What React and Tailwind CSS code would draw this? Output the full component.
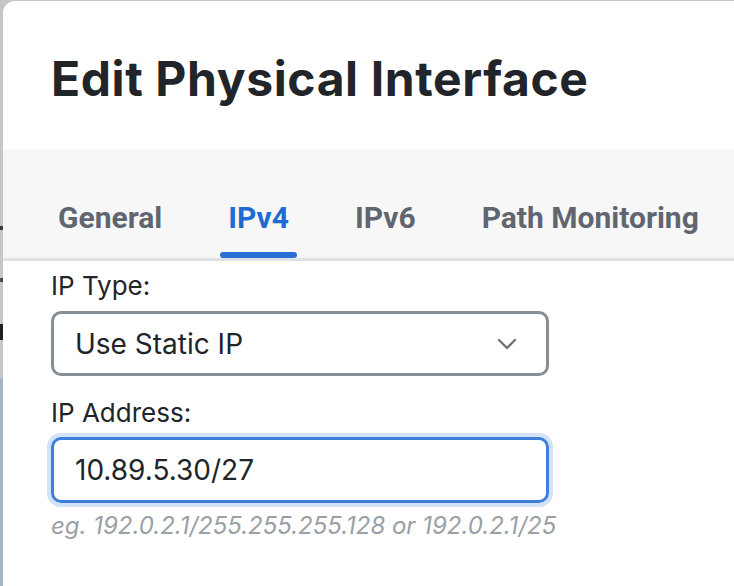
import React from 'react';

const tabs = ['General', 'IPv4', 'IPv6', 'Path Monitoring'];

const App = () => {
  return (
    <div className="w-[734px] h-[586px] overflow-hidden bg-[#c6c6c6] pt-px flex">
      {/* Backdrop strip on the left */}
      <div className="w-[3px] flex flex-col shrink-0">
        <div className="h-[225px] bg-[#c6c6c6]"></div>
        <div className="h-[4px] bg-[#3a3a3a]"></div>
        <div className="h-[48px] bg-[#c6c6c6]"></div>
        <div className="h-[4px] bg-[#4a4a4a]"></div>
        <div className="h-[42px] bg-[#c6c6c6]"></div>
        <div className="h-[16px] bg-[#1f1f1f]"></div>
        <div className="h-[38px] bg-[#c6c6c6]"></div>
        <div className="flex-1 bg-[#aab4c7]"></div>
      </div>

      {/* Modal */}
      <div className="flex-1 bg-white rounded-tl-[12px] flex flex-col">
        {/* Header */}
        <div className="h-[148px] pl-[48px] pt-[50px]">
          <h1 className="text-[48px] leading-[56px] font-bold tracking-[0.6px] text-[#212529] font-['Inter',sans-serif]">
            Edit Physical Interface
          </h1>
        </div>

        {/* Tabs */}
        <div className="h-[112px] bg-[#f7f7f8] border-b-[3px] border-[#dfe1e4] flex items-end pl-[47px] gap-[50px] font-['Roboto',sans-serif]">
          {tabs.map((t) => (
            <div key={t} className="flex flex-col items-stretch">
              <span
                className={
                  t === 'IPv4'
                    ? 'px-[8px] text-[30px] leading-[34px] font-bold text-[#1f6bd1]'
                    : 'px-[8px] text-[30px] leading-[34px] font-bold text-[#5f6670]'
                }
              >
                {t}
              </span>
              <div
                className={
                  t === 'IPv4'
                    ? 'mt-[17px] h-[6px] rounded-full bg-[#2b6fd6]'
                    : 'mt-[17px] h-[6px]'
                }
              ></div>
            </div>
          ))}
        </div>

        {/* Form */}
        <div className="pl-[48px] pt-[8px] font-['Inter',sans-serif]">
          <label className="block text-[26px] leading-[34px] text-[#212529]">IP Type:</label>
          <div className="mt-[8px] w-[498px] h-[65px] border-[3px] border-[#868e96] rounded-[10px] flex items-center justify-between pl-[21px] pr-[29px]">
            <span className="text-[28px] text-[#212529]">Use Static IP</span>
            <svg width="20" height="12" viewBox="0 0 20 12" fill="none">
              <path d="M2 2l8 8 8-8" stroke="#6c757d" strokeWidth="2.4" strokeLinecap="round" strokeLinejoin="round" />
            </svg>
          </div>

          <label className="block mt-[20px] text-[26px] leading-[34px] text-[#212529]">IP Address:</label>
          <div className="mt-[7px] w-[498px] h-[66px] border-[3px] border-[#3f7fdc] rounded-[10px] flex items-center pl-[21px] shadow-[0_0_0_4px_#d3e2f8]">
            <span className="text-[28px] text-[#212529]">10.89.5.30/27</span>
          </div>

          <p className="mt-[7px] text-[24px] leading-[32px] italic text-[#9aa0a6]">
            eg. 192.0.2.1/255.255.255.128 or 192.0.2.1/25
          </p>
        </div>
      </div>
    </div>
  );
};

export default App;
